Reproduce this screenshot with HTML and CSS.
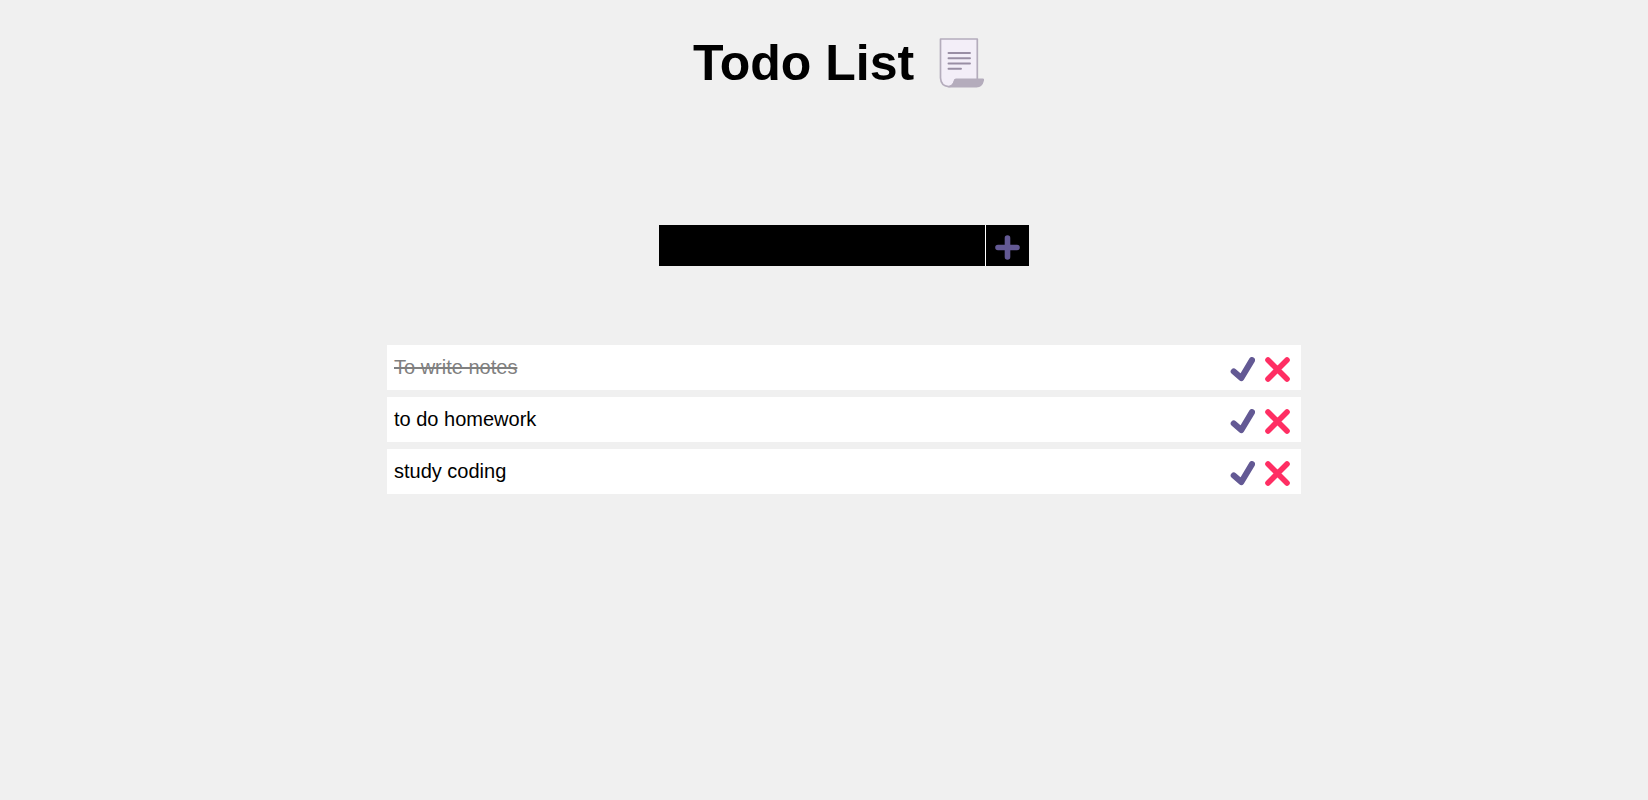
FILE: index.html
```html
<!DOCTYPE html>
<html lang="en">
<head>
<meta charset="utf-8">
<title>Todo List</title>
<link rel="stylesheet" href="styles.css">
</head>
<body>
<svg width="0" height="0" class="symbols" aria-hidden="true">
  <symbol id="check" viewBox="0 0 25 25"><path d="M3.800 14.500 11.300 21 22 3.200" fill="none" stroke="#635994" stroke-width="6.200" stroke-linecap="round" stroke-linejoin="round"/></symbol>
  <symbol id="cross" viewBox="0 0 25 25"><path d="M3 3 22 22M22 3 3 22" fill="none" stroke="#ff2e63" stroke-width="5.600" stroke-linecap="round"/></symbol>
  <symbol id="plus" viewBox="0 0 25 25"><path d="M12.500 3V22M3 12.500H22" fill="none" stroke="#635994" stroke-width="5.600" stroke-linecap="round"/></symbol>
</svg>
<header class="header">
  <h1 class="title">Todo List</h1>
  <svg class="scroll" viewBox="0 0 46 50" aria-hidden="true">
    <path d="M1.500 1H38.300V42H16Q14.500 48.600 9.500 48.600Q2 48 1.500 40Z" fill="#f3eef8" stroke="#b4acbc" stroke-width="1.700" stroke-linejoin="round"/>
    <path d="M17 40.500H44Q45.500 40.500 45 42.500Q43.500 49.400 37.500 49.400H9.500Q9 48.500 11 47.800Q14 46.500 14.800 42.500Q15.300 40.500 17 40.500Z" fill="#b4acbc"/>
    <path d="M9.500 15H31M9.500 20.300H31M9.500 25.500H31M9.500 30.800H22" stroke="#998ea4" stroke-width="1.900" stroke-linecap="round"/>
  </svg>
</header>
<main>
  <form class="form">
    <input class="field" type="text" aria-label="New todo">
    <button class="add" type="button" aria-label="Add todo"><svg class="icon"><use href="#plus"/></svg></button>
  </form>
  <ul class="list">
    <li class="item done"><span class="text">To write notes</span>
      <button class="action" type="button" aria-label="Complete"><svg class="icon"><use href="#check"/></svg></button>
      <button class="action" type="button" aria-label="Delete"><svg class="icon"><use href="#cross"/></svg></button></li>
    <li class="item"><span class="text">to do homework</span>
      <button class="action" type="button" aria-label="Complete"><svg class="icon"><use href="#check"/></svg></button>
      <button class="action" type="button" aria-label="Delete"><svg class="icon"><use href="#cross"/></svg></button></li>
    <li class="item"><span class="text">study coding</span>
      <button class="action" type="button" aria-label="Complete"><svg class="icon"><use href="#check"/></svg></button>
      <button class="action" type="button" aria-label="Delete"><svg class="icon"><use href="#cross"/></svg></button></li>
  </ul>
</main>
</body>
</html>
```
FILE: styles.css
```css
* { box-sizing: border-box; }
body {
  margin: 0;
  padding: 35px 0 40px 40px;
  background: #f0f0f0;
  color: #000;
  font: 20px/24px "Liberation Sans", Arial, sans-serif;
}
.symbols { position: absolute; }
.header {
  display: flex;
  justify-content: center;
  align-items: center;
  gap: 25px;
  padding-right: 10px;
}
.title { margin: 0; font-size: 50px; line-height: 56px; }
.scroll { width: 46px; height: 50px; }
.form {
  display: flex;
  justify-content: center;
  margin-top: 134px;
}
.field {
  width: 327px;
  height: 41px;
  padding: 0 8px;
  border: 0;
  border-right: 1px solid #fff;
  border-radius: 0;
  background: #000;
  color: #fff;
  font: inherit;
}
.add {
  display: flex;
  align-items: center;
  justify-content: center;
  width: 43px;
  padding: 4px 0 0;
  border: 0;
  background: #000;
}
.icon { display: block; width: 25px; height: 25px; }
.list {
  display: flex;
  flex-direction: column;
  gap: 7px;
  width: 914px;
  max-width: 100%;
  margin: 79px auto 0;
  padding: 0;
  list-style: none;
}
.item {
  display: flex;
  align-items: center;
  gap: 10px;
  padding: 12px 11px 8px 7px;
  background: #fff;
}
.text { flex: 1; padding-bottom: 4px; line-height: 21px; }
.done .text { color: #808080; text-decoration: line-through; }
.action { padding: 0; border: 0; background: none; }
```
